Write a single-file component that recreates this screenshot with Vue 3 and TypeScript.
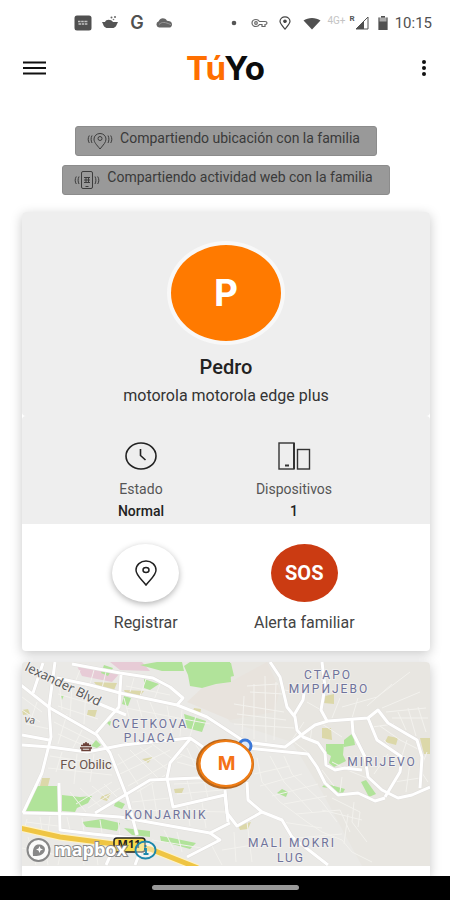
<script setup lang="ts">
interface Stat {
  label: string
  value: string
  icon: 'clock' | 'devices'
}

interface MapLabel {
  x: number
  y: number
  text: string
}

const user = { name: 'Pedro', initial: 'P', device: 'motorola motorola edge plus' }

const stats: Stat[] = [
  { label: 'Estado', value: 'Normal', icon: 'clock' },
  { label: 'Dispositivos', value: '1', icon: 'devices' },
]

const districts: MapLabel[] = [
  { x: 128, y: 66, text: 'CVETKOVA' },
  { x: 128, y: 80, text: 'PIJACA' },
  { x: 144, y: 157, text: 'KONJARNIK' },
  { x: 306, y: 17, text: 'СТАРО' },
  { x: 307, y: 31, text: 'МИРИЈЕВО' },
  { x: 360, y: 104, text: 'MIRIJEVO' },
  { x: 270, y: 185, text: 'MALI MOKRI' },
  { x: 269, y: 200, text: 'LUG' },
]

const roads: string[] = [
  'M35 16L68 23L98 31L155 43L185 55L208 70L223 80L263 85L278 74L293 63L306 59L346 56L356 48L366 61L383 71L395 78L400 95L398 126',
  'M50 2L98 11L131 16L148 25L161 36L155 43',
  'M99 13L97 45L87 56L74 71',
  'M-1 23L28 46L75 73L88 91L105 135L115 173',
  'M33 0L27 45L29 75L20 111L1 151',
  'M21 1L11 31',
  'M0 83L28 85L65 90L101 83L168 76L181 85',
  'M0 73L27 78',
  'M1 151L55 152L98 155L188 171L208 161',
  'M73 151L128 118L174 116L208 116',
  'M169 76L148 101L145 116L151 145L203 133L205 151L215 164L240 150',
  'M37 121L38 168L71 172L121 177',
  'M68 38L104 53',
  'M188 171L198 178L165 195',
  'M248 0L258 15L265 45L273 55L275 68L281 75L296 81L303 91L304 103L313 108L323 106L340 108',
  'M283 25L281 38L272 53',
  'M300 0L303 25L299 48L305 59',
  'M330 58L331 71L343 95L346 115L360 128L376 136L390 133L408 125',
  'M346 56L355 78L380 95L378 110L363 135',
  'M225 86L286 92L295 105L303 121L316 133L336 131L353 139L363 136',
  'M225 120L226 138L240 150L260 158L270 175L306 203',
  'M203 128L206 160',
  'M90 190L84 203M118 190L113 203',
]

const lanes: string[] = [
  'M0 35L20 50M0 48L18 60M4 62L28 67M15 40L8 60M37 18L40 48M50 22L48 56M64 25L62 62M36 32L70 42M36 44L76 57',
  'M58 8L54 18M72 8L68 22M84 10L80 26M112 16L108 30M124 17L118 34M138 22L132 38M104 24L148 33',
  'M102 36L110 66M115 38L120 55M128 40L135 57M145 44L150 70M160 48L158 74M174 54L168 74M104 46L188 62',
  'M32 60L72 80M36 72L68 86M45 52L36 82M60 68L50 88M28 94L85 103M26 106L90 113M40 90L34 110M55 92L52 122M72 92L68 120',
  'M96 92L120 128M108 88L136 116M118 85L146 108M130 82L152 98M95 103L130 84M98 112L148 88M106 124L160 94M115 130L145 112',
  'M165 86L176 110M172 80L182 95M155 100L174 105M158 92L178 100M152 122L198 120M155 132L200 128M165 118L170 138M182 118L186 136',
  'M48 130L64 150M58 126L80 146M70 124L92 142M82 122L96 136M54 142L90 120M66 146L98 126M118 128L124 152M130 122L136 158M110 140L148 136M112 148L206 150M165 144L168 164M180 140L184 166',
  'M5 157L2 168M18 155L20 169M28 154L26 170M45 155L48 168M60 156L62 170M78 158L80 171M96 158L98 174M4 160L36 164',
  'M6 175L14 203M22 180L26 203M40 184L36 203M0 186L50 196M60 184L62 203M74 188L76 203M142 168L152 188M155 170L160 190M130 178L180 186M190 184L200 203M212 170L214 200M225 160L230 200M200 188L250 180',
  'M212 42L262 50M215 52L264 58M222 34L220 74M232 22L232 77M243 14L244 80M254 20L252 78M212 62L272 66M228 30L262 32M225 24L256 22',
  'M262 88L262 92M272 80L285 90M282 60L270 78M290 65L288 80M300 62L320 75M285 40L299 48M276 30L262 28M310 10L304 30M318 36L310 56M336 36L330 56M320 45L355 35L388 10M345 44L370 22M360 46L398 30',
  'M364 50L404 46M370 56L406 56M376 50L384 68M386 46L394 74M396 45L404 70M358 64L378 78L398 88M350 65L372 62M362 78L375 92M405 90L398 108L406 120M385 78L378 100M366 92L352 112M388 100L384 130M372 120L398 116',
  'M235 96L240 120L258 140L285 160M248 94L262 120L290 150M262 94L270 112L300 140L315 160M232 112L268 104M238 124L280 112M250 134L296 122M262 142L305 134M274 152L318 148L328 170',
  'M285 160L300 170L320 178L330 190L350 200M300 148L340 158M310 136L338 150L336 165M332 140L330 160L345 180M326 152L322 182M260 160L300 166M275 176L320 172M310 100L330 110L350 118M320 115L318 130M300 108L312 124',
]

const parks: string[] = [
  'M12 124L38 124L38 150L2 149Z',
  'M40 133L58 135L70 134L66 141L55 146L53 150L40 149Z',
  'M168 0L208 0L209 20L194 22L180 26L168 24L166 13L162 4Z',
  'M118 3L135 0L160 0L162 9L140 9Z',
  'M203 0L209 1L212 14L203 16Z',
  'M102 34L109 36L106 44L100 42Z',
  'M122 17L137 22L128 28L122 26Z',
  'M162 52L184 59L180 70L165 66Z',
  'M60 160L80 157L98 161L95 169L78 166L64 165Z',
  'M102 166L128 169L128 175L110 173Z',
  'M138 174L150 176L174 181L168 187L150 182L139 179Z',
  'M94 138L103 142L100 147L92 144Z',
  'M304 82L322 82L321 93L324 99L312 105L307 101L309 94L304 91Z',
  'M322 78L331 71L333 83L322 85Z',
  'M306 122L312 124L323 127L321 131L310 130Z',
  'M339 120L344 118L354 132L347 135Z',
  'M255 131L260 127L266 130L264 135Z',
  'M82 3L91 6L86 14L79 11Z',
  'M74 78L79 83L75 86L69 84Z',
  'M39 34L42 33L40 38Z',
  'M84 60L89 59L88 64Z',
  'M300 125L302 123L306 126Z',
]

const fields: string[] = [
  'M66 48L75 48L73 55L65 53Z',
  'M72 20L95 21L92 28L75 24Z',
  'M102 28L122 29L118 34L104 33Z',
  'M120 97L131 95L126 101Z',
  'M152 127L162 126L160 131L153 131Z',
  'M80 134L89 131L85 139L78 137Z',
  'M300 66L309 66L310 78L300 76Z',
  'M303 34L312 32L312 42L302 41Z',
  'M366 74L376 76L374 83L363 80Z',
  'M398 76L408 76L408 92L402 92Z',
  'M216 163L229 160L226 167L218 168Z',
  'M20 116L28 116L26 124L18 124Z',
  'M172 46L179 47L178 53L170 51Z',
  'M0 48L6 47L8 52L1 53Z',
]
</script>

<template>
  <div class="screen">
    <div class="status">
      <div class="status-group">
        <svg viewBox="0 0 18 16" width="18" height="16">
          <rect x="0.5" y="0.5" width="17" height="15" rx="2.5" fill="#505050" />
          <path d="M4 6.500h10M4.500 9h9" stroke="#c4c4c4" stroke-width="1.500" stroke-dasharray="2.500 .7" fill="none" />
        </svg>
        <svg viewBox="0 0 18 16" width="18" height="16">
          <path d="M1 7h16l-1 2c-.6 2-1.500 3.200-3.500 4H5.500C3.500 12.200 2.400 11 2 9z" fill="#555" />
          <path d="M4 7c1-3 6-3 8 0z" fill="#555" />
          <circle cx="10.500" cy="2.500" r="1" fill="#666" /><circle cx="14" cy="2" r="1" fill="#666" /><circle cx="12.500" cy="4.500" r=".8" fill="#777" />
        </svg>
        <span class="google">G</span>
        <svg viewBox="0 0 18 16" width="18" height="16">
          <path d="M4 12.500a3.200 3.200 0 0 1-.3-6.200C5 3 9.500 2 12 5.800c4 .2 5 2 5 3.600 0 2-1.200 3.100-3 3.100z" fill="#666" />
          <path d="M4 9.500c3-3 6-2.500 12 .2" stroke="#999" fill="none" />
        </svg>
      </div>
      <div class="status-group right">
        <svg viewBox="0 0 6 16" width="6" height="16"><circle cx="3" cy="8" r="2.300" fill="#555" /></svg>
        <svg class="key" viewBox="0 0 17 12" width="17" height="12" fill="none" stroke="#666" stroke-width="1.200">
          <path d="M8.500 4.500C7.500 3 6.500 2.500 5 2.500a4 3.500 0 0 0 0 7c1.500 0 2.800-.8 3.500-2H11v2h3v-2c1.500 0 2-.8 2-1.500s-.6-1.500-2-1.500z" />
          <circle cx="5" cy="6" r="1.300" />
        </svg>
        <svg class="spot" viewBox="0 0 12 14" width="12" height="14" fill="none" stroke="#444" stroke-width="1.200">
          <path d="M6 13C3 9.500 1 7.500 1 5.300a5 4.500 0 0 1 10 0C11 7.500 9 9.500 6 13z" /><circle cx="6" cy="5.300" r="1.200" fill="#444" />
        </svg>
        <svg class="wifi" viewBox="0 0 18 13" width="18" height="13"><path d="M.5 3.500C5 0 13 0 17.500 3.500L9 12.500z" fill="#505050" /></svg>
        <span class="net">4G+</span>
        <span class="signal">
          <span class="roaming">R</span>
          <svg viewBox="0 0 14 14" width="14" height="14">
            <path d="M13 1v12H1z" fill="none" stroke="#555" /><path d="M9 5v8H1z" fill="#505050" />
          </svg>
        </span>
        <svg class="battery" viewBox="0 0 10 14" width="10" height="14">
          <path d="M3 0h4v1.500h2.500V14h-9V1.500H3z" fill="#aaa" /><path d="M.5 5.500h9V14h-9zM.5 1.500h1V6h-1zM8.500 1.500h1V6h-1zM3 0h4v1.500H3z" fill="#505050" />
        </svg>
        <time class="clock">10:15</time>
      </div>
    </div>

    <header class="appbar">
      <button class="bar-btn" type="button" aria-label="Menú">
        <svg viewBox="0 0 24 16" width="24" height="16" stroke="#111" stroke-width="2"><path d="M1 2.500h23M1 8h23M1 13.500h23" /></svg>
      </button>
      <h1 class="logo"><span class="logo-tu">Tú</span>Yo</h1>
      <button class="bar-btn" type="button" aria-label="Más opciones">
        <svg viewBox="0 0 6 18" width="6" height="18" fill="#111"><circle cx="3" cy="3" r="2" /><circle cx="3" cy="9" r="2" /><circle cx="3" cy="15" r="2" /></svg>
      </button>
    </header>

    <main class="content">
      <div class="notices">
        <p class="notice">
          <svg viewBox="0 0 26 20" width="26" height="20" fill="none" stroke="#3c3c3c">
            <path d="M13 18C9.500 13.500 7 11.500 7 8a6 5.500 0 0 1 12 0c0 3.500-2.500 5.500-6 10z" /><circle cx="13" cy="7.500" r="2" />
            <path d="M5 4.500C3.800 7 3.800 9.500 5 12M2.300 4.500C.8 7 .8 9.500 2.300 12M21 4.500c1.200 2.500 1.200 5 0 7.500M23.700 4.500c1.500 2.500 1.500 5 0 7.500" />
          </svg>
          <span>Compartiendo ubicación con la familia</span>
        </p>
        <p class="notice">
          <svg viewBox="0 0 26 20" width="26" height="20" fill="none" stroke="#3c3c3c">
            <rect x="7.500" y="1.500" width="11" height="17" rx="1.500" /><path d="M10 7.500h6M10 10h6M10 12.500h6M12 7v6M14.500 7v6M11.500 16.500h3" />
            <path d="M5 6.500c-1.200 2.500-1.200 5 0 7.500M2.300 6.500c-1.500 2.500-1.500 5 0 7.500M21 6.500c1.200 2.500 1.200 5 0 7.500M23.700 6.500c1.500 2.500 1.500 5 0 7.500" />
          </svg>
          <span>Compartiendo actividad web con la familia</span>
        </p>
      </div>

      <section class="card">
        <div class="profile">
          <div class="avatar">{{ user.initial }}</div>
          <h2 class="name">{{ user.name }}</h2>
          <p class="device">{{ user.device }}</p>
        </div>
        <dl class="stats">
          <div v-for="s in stats" :key="s.label" class="stat">
            <svg v-if="s.icon === 'clock'" viewBox="0 0 34 28" width="34" height="28" fill="none" stroke="#222" stroke-width="1.600">
              <ellipse cx="17" cy="14" rx="15" ry="13" /><path d="M16.500 7v6.500L21.500 18" />
            </svg>
            <svg v-else viewBox="0 0 34 28" width="34" height="28" fill="none" stroke="#333" stroke-width="1.400">
              <rect x="2" y="1" width="15" height="26" /><path d="M17 1v26" stroke-width="2" /><rect x="20.500" y="7.500" width="12" height="19.500" /><path d="M8 23.500h4" stroke-width="2" />
            </svg>
            <dt>{{ s.label }}</dt>
            <dd>{{ s.value }}</dd>
          </div>
        </dl>
        <div class="actions">
          <button class="action" type="button">
            <span class="disc">
              <svg viewBox="0 0 24 28" width="24" height="28" fill="none" stroke="#222" stroke-width="1.500">
                <path d="M12 26C8 20.500 2 16.500 2 11a10 9 0 0 1 20 0c0 5.500-6 9.500-10 15z" /><ellipse cx="12" cy="11" rx="3" ry="2.500" />
              </svg>
            </span>
            <span class="caption">Registrar</span>
          </button>
          <button class="action" type="button">
            <span class="disc sos">SOS</span>
            <span class="caption">Alerta familiar</span>
          </button>
        </div>
      </section>

      <section class="map-card">
        <svg class="map" viewBox="0 0 408 204" preserveAspectRatio="xMidYMid slice" role="img" aria-label="Mapa">
          <rect width="408" height="204" fill="#e8e6e1" />
          <path d="M0 0H165L208 60L270 80L300 130L340 204H0z" fill="#eae9e6" />
          <path d="M180 26L208 20L245 0L258 28L252 50L208 58L165 40z" fill="#e8e3dd" />
          <path d="M55 4L75 8L98 11L90 20L60 14ZM88 0H120L128 9L98 8Z" fill="#e7cbd6" />
          <path v-for="d in fields" :key="d" :d="d" fill="#dcd8a9" />
          <path v-for="d in parks" :key="d" :d="d" class="park" />
          <path v-for="d in lanes" :key="d" :d="d" class="lane" />
          <path v-for="d in roads" :key="d" :d="d" class="road-edge" />
          <path v-for="d in roads" :key="'r' + d" :d="d" class="road" />
          <path d="M-2 166L38 175L92 182L128 187L176 206" class="highway-edge" />
          <path d="M-2 166L38 175L92 182L128 187L176 206" class="highway" />

          <g class="district">
            <text v-for="l in districts" :key="l.text" :x="l.x" :y="l.y">{{ l.text }}</text>
          </g>
          <text class="street" transform="translate(2 8) rotate(26)">lexander Blvd</text>
          <text class="street small" transform="translate(2 60) rotate(12)">va</text>
          <path d="M58 86h12M59 83.500h10M64 80v3M61 82h6M60 86v2.500h8V86" stroke="#6b4038" stroke-width="1.500" fill="none" />
          <text class="poi" x="64" y="107">FC Obilic</text>

          <rect x="92" y="176" width="31" height="14" rx="3" fill="#f7d94c" stroke="#222" stroke-width="1.500" />
          <text class="shield" x="107" y="186">M11</text>
          <circle cx="16.500" cy="188" r="11" fill="#fff" fill-opacity=".8" stroke="#888" stroke-width="2" />
          <path d="M11 194c-1-10 3-12 7-11.500 4 .5 6 4 4.500 7-1.500 3.500-6 5-11.500 4.500z" fill="#888" />
          <path d="M17.500 184l1 2.500 2.500 1-2.500 1-1 2.500-1-2.500-2.500-1 2.500-1z" fill="#fff" />
          <text class="mapbox" x="32" y="194">mapbox</text>
          <ellipse cx="123.500" cy="188" rx="10" ry="8.500" fill="#fff" fill-opacity=".4" stroke="#1d87ab" stroke-width="1.800" />
          <path d="M123.500 183v2M122 187h2v5M121.500 192h5" stroke="#1d87ab" stroke-width="1.800" fill="none" />

          <circle cx="223" cy="84" r="6" fill="#dfe9f8" stroke="#3b78d8" stroke-width="3" />
          <ellipse cx="203" cy="102" rx="27.500" ry="23.500" fill="#fff" stroke="#b5651d" stroke-width="3" />
          <ellipse cx="204" cy="101.500" rx="26.500" ry="22.500" fill="#fff" stroke="#ef7c14" stroke-width="2.200" />
          <text class="marker" x="204.500" y="108">M</text>
        </svg>
      </section>
    </main>

    <div class="navbar"><span class="handle"></span></div>
  </div>
</template>

<style>
body {
  background: #fff;
}
</style>

<style scoped>
.screen {
  display: flex;
  flex-direction: column;
  min-height: 100vh;
  font-family: Roboto, "Liberation Sans", sans-serif;
  color: #222;
  background: #fff;
  overflow: hidden;
}
.screen * {
  box-sizing: border-box;
}
h1,
h2,
p,
dl,
dd {
  margin: 0;
}
button {
  font: inherit;
  color: inherit;
  border: 0;
  padding: 0;
  background: none;
  cursor: pointer;
}
svg {
  display: block;
  flex: none;
}
.status {
  display: flex;
  align-items: center;
  justify-content: space-between;
  height: 46px;
  padding: 0 18px 0 74px;
}
.status-group {
  display: flex;
  align-items: center;
  gap: 9px;
}
.status-group.right {
  gap: 0;
}
.google {
  width: 18px;
  text-align: center;
  font: 600 18px/20px Inter, sans-serif;
  color: #505050;
}
.key {
  margin-left: 14px;
}
.spot {
  margin-left: 11px;
}
.wifi {
  margin-left: 12px;
}
.net {
  margin-left: 6px;
  font-size: 10px;
  line-height: 16px;
  color: #c4c4c4;
  padding-bottom: 4px;
}
.signal {
  display: flex;
  margin-left: 4px;
}
.roaming {
  font-size: 8px;
  font-weight: 700;
  line-height: 6px;
  color: #555;
}
.battery {
  margin-left: 9px;
}
.clock {
  margin-left: 7px;
  font-size: 15px;
  line-height: 20px;
  color: #505050;
}
.appbar {
  display: flex;
  align-items: center;
  justify-content: space-between;
  height: 44px;
  padding: 0 21px 0 22px;
}
.bar-btn {
  display: flex;
  align-items: center;
  width: 28px;
  height: 28px;
}
.bar-btn:last-child {
  justify-content: flex-end;
  padding-right: 2px;
}
.logo {
  font: 700 33px/44px Inter, sans-serif;
  color: #0c0c0c;
}
.logo-tu {
  color: #ff6f00;
}
.content {
  flex: 1;
  padding: 36px 20px 0 22px;
}
.notices {
  display: flex;
  flex-direction: column;
  align-items: center;
  gap: 9px;
  margin-bottom: 17px;
}
.notice {
  display: flex;
  gap: 7px;
  height: 30px;
  padding: 4px 16px 4px 11px;
  border: 1px solid #8c8c8c;
  border-radius: 3px;
  background: #999;
  color: #3a3a3a;
  font-size: 14px;
  line-height: 14px;
}
.card,
.map-card {
  border-radius: 4px;
  background: #fff;
  box-shadow: 0 3px 12px rgba(0, 0, 0, 0.22);
}
.card {
  overflow: hidden;
  margin-bottom: 11px;
}
.profile,
.stats {
  background: #eee;
  text-align: center;
}
.profile {
  display: flex;
  flex-direction: column;
  align-items: center;
  padding: 29px 0 9px;
  border-radius: 0 0 4px 4px;
}
.avatar {
  width: 118px;
  height: 104px;
  border: 4px solid #f8f8f8;
  border-radius: 50%;
  background: #ff7a00;
  color: #fff;
  font: 700 37px/96px Inter, sans-serif;
}
.name {
  margin-top: 10px;
  font-size: 20px;
  font-weight: 500;
  line-height: 24px;
}
.device {
  margin-top: 6px;
  font-size: 16px;
  line-height: 22px;
  color: #333;
}
.stats {
  display: grid;
  grid-template-columns: 1fr 1fr;
  gap: 35px;
  padding: 26px 77px 3px 60px;
  border-radius: 4px 4px 0 0;
}
.stat {
  display: flex;
  flex-direction: column;
  align-items: center;
  font-size: 14px;
}
.stat dt {
  margin-top: 9px;
  line-height: 20px;
  color: #555;
}
.stat dd {
  margin-top: 2px;
  line-height: 20px;
  font-weight: 500;
}
.actions {
  display: grid;
  grid-template-columns: 1fr 1fr;
  gap: 35px;
  padding: 20px 64px 18px 62px;
}
.action {
  display: flex;
  flex-direction: column;
  align-items: center;
  gap: 11px;
  font-size: 16px;
  line-height: 20px;
  color: #444;
  white-space: nowrap;
}
.disc {
  display: flex;
  align-items: center;
  justify-content: center;
  width: 67px;
  height: 58px;
  border-radius: 50%;
  background: #fff;
  box-shadow: 0 2px 6px rgba(0, 0, 0, 0.3);
}
.disc.sos {
  background: #cb3b12;
  box-shadow: none;
  color: #fff;
  font-size: 20px;
  font-weight: 700;
}
.map-card {
  padding-bottom: 10px;
  border-radius: 4px 4px 0 0;
}
.map {
  width: 100%;
  aspect-ratio: 2 / 1;
  border-radius: 4px 4px 0 0;
}
.park {
  fill: #b1e39a;
}
.lane {
  fill: none;
  stroke: #f3f2ee;
  stroke-width: 1;
}
.road-edge,
.road {
  fill: none;
  stroke-linejoin: round;
  stroke: #e0dedc;
  stroke-width: 4;
}
.road {
  stroke: #fff;
  stroke-width: 3;
}
.highway-edge,
.highway {
  fill: none;
  stroke: #fff3c4;
  stroke-width: 7;
}
.highway {
  stroke: #efc544;
  stroke-width: 5;
}
.map text {
  font-family: "Open Sans", sans-serif;
  text-anchor: middle;
  paint-order: stroke;
  stroke: #f1f0ee;
  stroke-width: 2;
}
.map .district text {
  font-family: Roboto, sans-serif;
  font-size: 12px;
  letter-spacing: 2px;
  fill: #6f739b;
}
.map .street {
  font-size: 13px;
  text-anchor: start;
  fill: #555;
}
.map .street.small {
  font-size: 10px;
}
.map .poi {
  font-family: Roboto, sans-serif;
  font-size: 13px;
  fill: #6a544c;
}
.map .shield {
  font-size: 11px;
  font-weight: 700;
  fill: #222;
  stroke: none;
}
.map .mapbox {
  font-size: 18px;
  font-weight: 700;
  text-anchor: start;
  fill: #fff;
  stroke: #888;
}
.map .marker {
  font-family: Inter, sans-serif;
  font-size: 19px;
  font-weight: 700;
  fill: #f47216;
  stroke: none;
}
.navbar {
  display: flex;
  align-items: center;
  justify-content: center;
  height: 24px;
  background: #000;
}
.handle {
  width: 147px;
  height: 5px;
  margin-bottom: 2px;
  border-radius: 3px;
  background: #999;
}
</style>
